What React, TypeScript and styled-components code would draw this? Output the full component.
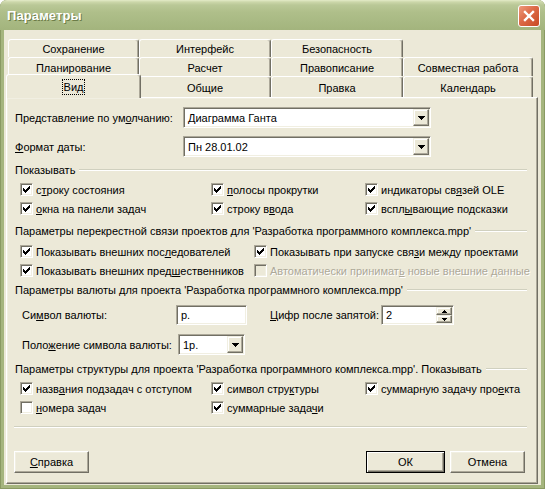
import { FC, ReactNode } from 'react';
import styled, { createGlobalStyle } from 'styled-components';

const colors = {
	face: '#ECE9D8',
	light: '#F1EFE2',
	shadow: '#ACA899',
	darkShadow: '#716F64',
	etch: '#D0D0BF',
	frame: '#A5B57E',
	frameEdge: '#8A9A63',
};

const uiFont = `'Liberation Sans', Arial, sans-serif`;

const GlobalStyle = createGlobalStyle`
	html, body {
		margin: 0;
		padding: 0;
		background: #ffffff;
	}
	body {
		font-family: ${uiFont};
		font-size: 11px;
		color: #000000;
	}
	* {
		box-sizing: border-box;
	}
`;

const Window = styled.div`
	display: flex;
	flex-direction: column;
	width: 545px;
	height: 489px;
	overflow: hidden;
	border-radius: 7px 7px 0 0;
	background: ${colors.frame};
	box-shadow: inset 1px 0 ${colors.frameEdge}, inset -1px 0 ${colors.frameEdge},
		inset 0 -1px ${colors.frameEdge};
`;

const TitleBar = styled.div`
	display: flex;
	align-items: center;
	justify-content: space-between;
	height: 30px;
	padding: 0 5px 0 7px;
	background: linear-gradient(
		to bottom,
		#e4ebc8 0,
		#ccd7aa 2px,
		#bac897 5px,
		#afbf8a 12px,
		#a8b983 22px,
		#a3b47d 30px
	);
`;

const Title = styled.span`
	font-family: ${uiFont};
	font-size: 13px;
	font-weight: bold;
	color: #ffffff;
	text-shadow: 1px 1px 0 #6c7c47;
	letter-spacing: 0.1px;
`;

const CloseButton = styled.div`
	display: flex;
	align-items: center;
	justify-content: center;
	width: 22px;
	height: 22px;
	margin-top: 1px;
	border: 1px solid #ffffff;
	border-radius: 3px;
	background: linear-gradient(135deg, #ee9a7c 0%, #dc6a47 45%, #c84a24 100%);
`;

const Client = styled.div`
	display: flex;
	flex-direction: column;
	flex: 1;
	margin: 0 4px 4px;
	padding: 9px 3px 1px 2px;
	background: ${colors.face};
`;

const TabRow = styled.div<{ $h: number }>`
	display: flex;
	height: ${({ $h }) => $h}px;
	padding-left: 2px;
`;

const Tab = styled.div<{ $w: number; $selected?: boolean }>`
	position: relative;
	z-index: ${({ $selected }) => ($selected ? 2 : 0)};
	display: flex;
	align-items: center;
	justify-content: center;
	flex: none;
	width: ${({ $w, $selected }) => ($selected ? $w + 4 : $w)}px;
	height: ${({ $selected }) => ($selected ? 'calc(100% + 3px)' : '100%')};
	margin: ${({ $selected }) => ($selected ? '-2px -2px -1px -2px' : '0')};
	padding-top: 1px;
	border: 1px solid;
	border-bottom: none;
	border-color: #ffffff ${colors.darkShadow} transparent #ffffff;
	border-radius: 3px 3px 0 0;
	box-shadow: inset -1px 0 ${colors.shadow};
	background: ${colors.face};
	white-space: nowrap;
`;

const FocusLabel = styled.span`
	padding: 0 1px;
	outline: 1px dotted #000000;
	outline-offset: 0;
	line-height: 14px;
`;

const Panel = styled.div`
	display: flex;
	flex-direction: column;
	flex: 1;
	padding: 0 10px 0 8px;
	border: 1px solid;
	border-color: #ffffff ${colors.darkShadow} ${colors.darkShadow} #ffffff;
	box-shadow: inset -1px -1px ${colors.shadow}, inset 1px 1px ${colors.light};
	background: ${colors.face};
`;

const FieldRow = styled.div<{ $mt: number; $h: number }>`
	display: flex;
	align-items: center;
	height: ${({ $h }) => $h}px;
	margin-top: ${({ $mt }) => $mt}px;
`;

const FieldLabel = styled.span<{ $w: number; $ml?: number }>`
	flex: none;
	width: ${({ $w }) => $w}px;
	margin-left: ${({ $ml }) => $ml ?? 0}px;
	white-space: nowrap;
`;

const Sunken = styled.div<{ $w: number }>`
	display: flex;
	align-items: stretch;
	flex: none;
	width: ${({ $w }) => $w}px;
	height: 100%;
	border: 1px solid;
	border-color: ${colors.shadow} #ffffff #ffffff ${colors.shadow};
	box-shadow: inset 1px 1px ${colors.darkShadow}, inset -1px -1px ${colors.light};
	background: #ffffff;
	padding: 1px;
`;

const FieldText = styled.span`
	display: flex;
	align-items: center;
	flex: 1;
	padding-left: 3px;
	white-space: nowrap;
	overflow: hidden;
`;

const Raised = styled.div`
	display: flex;
	align-items: center;
	justify-content: center;
	border: 1px solid;
	border-color: ${colors.light} ${colors.darkShadow} ${colors.darkShadow} ${colors.light};
	box-shadow: inset -1px -1px ${colors.shadow}, inset 1px 1px #ffffff;
	background: ${colors.face};
`;

const DropButton = styled(Raised)`
	flex: none;
	width: 16px;
`;

const SpinButtons = styled.div`
	display: flex;
	flex-direction: column;
	flex: none;
	width: 16px;
`;

const SpinButton = styled(Raised)`
	flex: 1;
`;

const GroupHeader = styled.div<{ $mt: number }>`
	display: flex;
	align-items: center;
	height: 14px;
	margin-top: ${({ $mt }) => $mt}px;
`;

const GroupTitle = styled.span`
	white-space: nowrap;
`;

const GroupLine = styled.div`
	flex: 1;
	height: 2px;
	margin-left: 4px;
	border-top: 1px solid ${colors.etch};
	border-bottom: 1px solid #ffffff;
`;

const CheckGrid = styled.div<{ $cols: string; $mt: number }>`
	display: grid;
	grid-template-columns: ${({ $cols }) => $cols};
	grid-auto-rows: 19px;
	margin-top: ${({ $mt }) => $mt}px;
	padding-left: 5px;
`;

const CheckItem = styled.div`
	display: flex;
	align-items: center;
	white-space: nowrap;
`;

const CheckBox = styled.div<{ $disabled?: boolean }>`
	display: flex;
	align-items: center;
	justify-content: center;
	flex: none;
	width: 13px;
	height: 13px;
	border: 1px solid;
	border-color: ${colors.shadow} #ffffff #ffffff ${colors.shadow};
	box-shadow: inset 1px 1px ${colors.darkShadow}, inset -1px -1px ${colors.light};
	background: ${({ $disabled }) => ($disabled ? colors.face : '#ffffff')};
`;

const CheckLabel = styled.span<{ $disabled?: boolean }>`
	margin-left: 3px;
	color: ${({ $disabled }) => ($disabled ? colors.shadow : '#000000')};
	text-shadow: ${({ $disabled }) => ($disabled ? '1px 1px 0 #ffffff' : 'none')};
`;

const Separator = styled.div`
	height: 2px;
	margin: 9px 0 0 -1px;
	border-top: 1px solid ${colors.etch};
	border-bottom: 1px solid #ffffff;
`;

const ButtonRow = styled.div`
	display: flex;
	justify-content: space-between;
	margin: 23px 2px 0 -1px;
`;

const ButtonGroup = styled.div`
	display: flex;
	gap: 5px;
`;

const Button = styled.div<{ $default?: boolean }>`
	display: flex;
	align-items: center;
	justify-content: center;
	width: ${({ $default }) => ($default ? 79 : 75)}px;
	height: 22px;
	border: 1px solid;
	border-color: ${({ $default }) =>
		$default ? '#000000' : `#ffffff ${colors.darkShadow} ${colors.darkShadow} #ffffff`};
	box-shadow: ${({ $default }) =>
		$default
			? `inset 1px 1px #ffffff, inset -1px -1px ${colors.darkShadow}, inset -2px -2px ${colors.shadow}`
			: `inset -1px -1px ${colors.shadow}, inset 1px 1px ${colors.light}`};
	background: ${colors.face};
`;

const Key = styled.span`
	text-decoration: underline;
	text-underline-offset: 1px;
`;

const Acc: FC<{ text: string; at?: number }> = ({ text, at }) =>
	at === undefined ? (
		<>{text}</>
	) : (
		<>
			{text.slice(0, at)}
			<Key>{text[at]}</Key>
			{text.slice(at + 1)}
		</>
	);

const CheckMark = () => (
	<svg width="7" height="7" viewBox="0 0 7 7" shapeRendering="crispEdges">
		<path d="M6 0h1v1h-1z M5 1h2v1h-2z M0 2h1v1h-1z M4 2h3v1h-3z M0 3h2v1h-2z M3 3h3v1h-3z M0 4h5v1h-5z M1 5h3v1h-3z M2 6h1v1h-1z" />
	</svg>
);

const DownArrow = () => (
	<svg width="7" height="4" viewBox="0 0 7 4" shapeRendering="crispEdges">
		<path d="M0 0h7v1h-1v1h-1v1h-1v1h-1v-1h-1v-1h-1v-1h-1z" />
	</svg>
);

const SmallArrow: FC<{ up?: boolean }> = ({ up }) => (
	<svg width="5" height="3" viewBox="0 0 5 3" shapeRendering="crispEdges">
		<path d={up ? 'M2 0h1v1h1v1h1v1h-5v-1h1v-1h1z' : 'M0 0h5v1h-1v1h-1v1h-1v-1h-1v-1h-1z'} />
	</svg>
);

interface ICheck {
	label: string;
	at?: number;
	checked?: boolean;
	disabled?: boolean;
}

const Check: FC<ICheck> = ({ label, at, checked, disabled }) => (
	<CheckItem>
		<CheckBox $disabled={disabled}>{checked && <CheckMark />}</CheckBox>
		<CheckLabel $disabled={disabled}>
			<Acc text={label} at={at} />
		</CheckLabel>
	</CheckItem>
);

const Combo: FC<{ w: number; children: ReactNode }> = ({ w, children }) => (
	<Sunken $w={w}>
		<FieldText>{children}</FieldText>
		<DropButton>
			<DownArrow />
		</DropButton>
	</Sunken>
);

const showItems: ICheck[] = [
	{ label: 'строку состояния', at: 1, checked: true },
	{ label: 'полосы прокрутки', at: 0, checked: true },
	{ label: 'индикаторы связей OLE', at: 13, checked: true },
	{ label: 'окна на панели задач', at: 0, checked: true },
	{ label: 'строку ввода', at: 8, checked: true },
	{ label: 'всплывающие подсказки', at: 4, checked: true },
];

const linkItems: ICheck[] = [
	{ label: 'Показывать внешних последователей', at: 22, checked: true },
	{ label: 'Показывать при запуске связи между проектами', at: 26, checked: true },
	{ label: 'Показывать внешних предшественников', at: 23, checked: true },
	{ label: 'Автоматически принимать новые внешние данные', at: 22, disabled: true },
];

const outlineItems: ICheck[] = [
	{ label: 'названия подзадач с отступом', at: 4, checked: true },
	{ label: 'символ структуры', at: 11, checked: true },
	{ label: 'суммарную задачу проекта', at: 20, checked: true },
	{ label: 'номера задач', at: 0 },
	{ label: 'суммарные задачи', at: 14, checked: true },
];

const tabRows = [
	['Сохранение', 'Интерфейс', 'Безопасность'],
	['Планирование', 'Расчет', 'Правописание', 'Совместная работа'],
	['Вид', 'Общие', 'Правка', 'Календарь'],
];
const tabWidths = [131, 132, 132, 130];

const App: FC = () => (
	<>
		<GlobalStyle />
		<Window>
			<TitleBar>
				<Title>Параметры</Title>
				<CloseButton>
					<svg width="12" height="12" viewBox="0 0 12 12">
						<path d="M2 2L10 10M10 2L2 10" stroke="#ffffff" strokeWidth="2.4" strokeLinecap="square" />
					</svg>
				</CloseButton>
			</TitleBar>
			<Client>
				<TabRow $h={18}>
					{tabRows[0].map((t, i) => (
						<Tab key={t} $w={tabWidths[i]}>
							{t}
						</Tab>
					))}
				</TabRow>
				<TabRow $h={19}>
					{tabRows[1].map((t, i) => (
						<Tab key={t} $w={tabWidths[i]}>
							{t}
						</Tab>
					))}
				</TabRow>
				<TabRow $h={21}>
					{tabRows[2].map((t, i) => (
						<Tab key={t} $w={tabWidths[i]} $selected={i === 0}>
							{i === 0 ? <FocusLabel>{t}</FocusLabel> : t}
						</Tab>
					))}
				</TabRow>
				<Panel>
					<FieldRow $mt={9} $h={21}>
						<FieldLabel $w={168}>
							<Acc text="Представление по умолчанию:" at={19} />
						</FieldLabel>
						<Combo w={248}>Диаграмма Ганта</Combo>
					</FieldRow>
					<FieldRow $mt={8} $h={21}>
						<FieldLabel $w={168}>
							<Acc text="Формат даты:" at={0} />
						</FieldLabel>
						<Combo w={248}>Пн 28.01.02</Combo>
					</FieldRow>

					<GroupHeader $mt={6}>
						<GroupTitle>Показывать</GroupTitle>
						<GroupLine />
					</GroupHeader>
					<CheckGrid $cols="191px 154px 1fr" $mt={3}>
						{showItems.map((c) => (
							<Check key={c.label} {...c} />
						))}
					</CheckGrid>

					<GroupHeader $mt={6}>
						<GroupTitle>
							Параметры перекрестной связи проектов для 'Разработка программного комплекса.mpp'
						</GroupTitle>
						<GroupLine />
					</GroupHeader>
					<CheckGrid $cols="234px 1fr" $mt={4}>
						{linkItems.map((c) => (
							<Check key={c.label} {...c} />
						))}
					</CheckGrid>

					<GroupHeader $mt={3}>
						<GroupTitle>Параметры валюты для проекта 'Разработка программного комплекса.mpp'</GroupTitle>
						<GroupLine />
					</GroupHeader>
					<FieldRow $mt={8} $h={20}>
						<FieldLabel $w={154} $ml={7}>
							<Acc text="Символ валюты:" at={2} />
						</FieldLabel>
						<Sunken $w={71}>
							<FieldText>р.</FieldText>
						</Sunken>
						<FieldLabel $w={111} $ml={23}>
							<Acc text="Цифр после запятой:" at={0} />
						</FieldLabel>
						<Sunken $w={73}>
							<FieldText>2</FieldText>
							<SpinButtons>
								<SpinButton>
									<SmallArrow up />
								</SpinButton>
								<SpinButton>
									<SmallArrow />
								</SpinButton>
							</SpinButtons>
						</Sunken>
					</FieldRow>
					<FieldRow $mt={9} $h={21}>
						<FieldLabel $w={156} $ml={7}>
							<Acc text="Положение символа валюты:" at={4} />
						</FieldLabel>
						<Combo w={67}>1р.</Combo>
					</FieldRow>

					<GroupHeader $mt={7}>
						<GroupTitle>
							Параметры структуры для проекта 'Разработка программного комплекса.mpp'. Показывать
						</GroupTitle>
						<GroupLine />
					</GroupHeader>
					<CheckGrid $cols="191px 154px 1fr" $mt={3}>
						{outlineItems.map((c) => (
							<Check key={c.label} {...c} />
						))}
					</CheckGrid>

					<Separator />

					<ButtonRow>
						<Button>
							<Acc text="Справка" at={0} />
						</Button>
						<ButtonGroup>
							<Button $default>ОК</Button>
							<Button>Отмена</Button>
						</ButtonGroup>
					</ButtonRow>
				</Panel>
			</Client>
		</Window>
	</>
);

export default App;
